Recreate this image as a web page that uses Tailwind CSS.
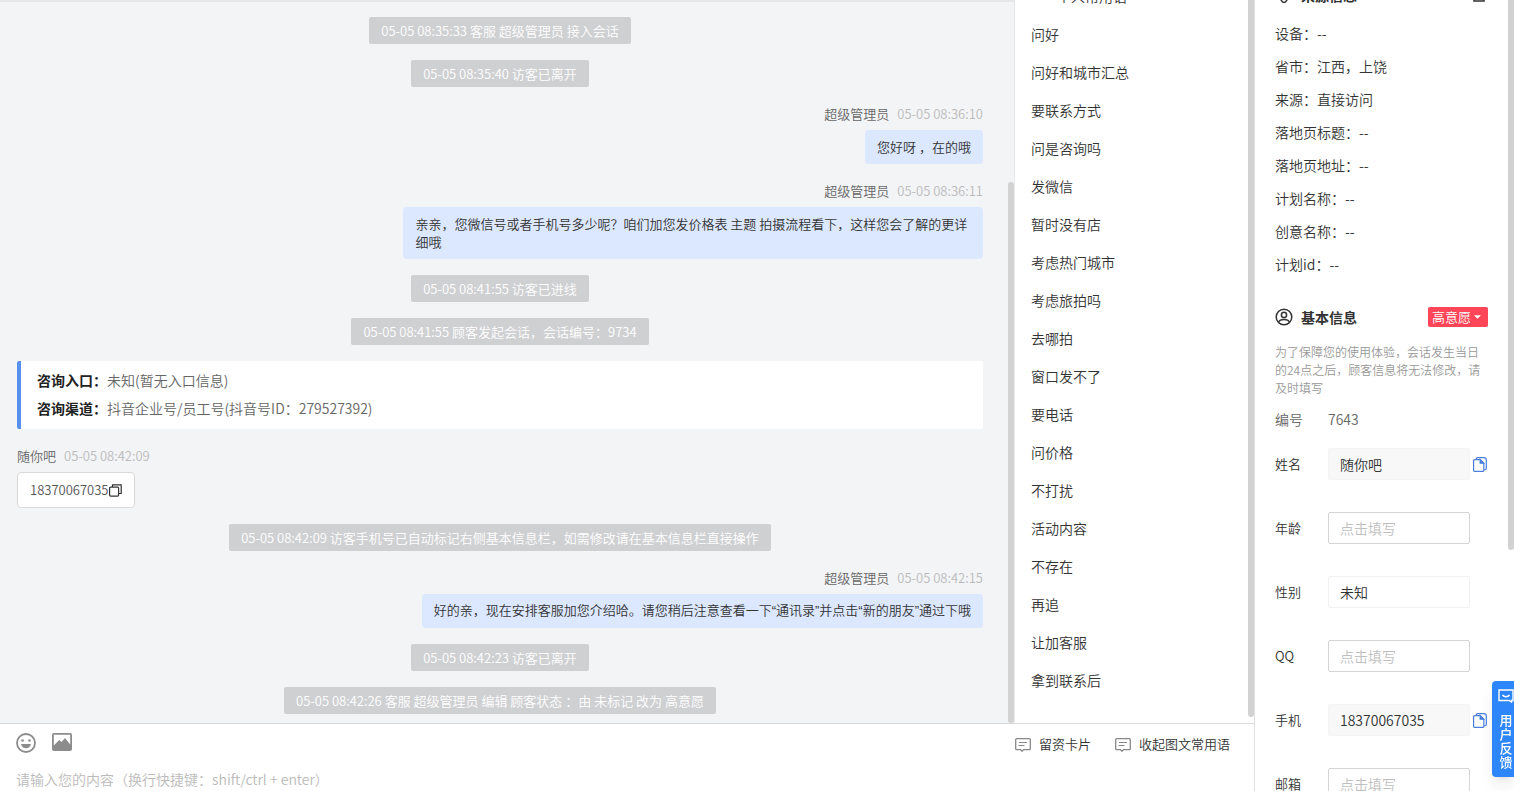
<!DOCTYPE html>
<html lang="zh-CN">
<head>
    <meta charset="UTF-8">
    <meta name="viewport" content="width=device-width, initial-scale=1.0">
    <title>客服工作台</title>
    <script src="https://cdn.jsdelivr.net/npm/@tailwindcss/browser@4"></script>
    <style>
        body {
            font-family: "Noto Sans CJK SC", sans-serif;
        }
    </style>
</head>
<body class="h-screen overflow-hidden bg-white text-sm font-[350] text-[#333]">
    <!-- 图标 -->
    <svg class="hidden">
        <symbol id="icon-copy" viewBox="0 0 14 15" fill="none" stroke="currentColor" stroke-width="1.200">
            <path d="M3.500 2.200V1.600a1 1 0 0 1 1-1h6.400a2.400 2.400 0 0 1 2.400 2.400v8.600a1 1 0 0 1-1 1h-1"/>
            <path d="M1.600 2.600h5.600l3.600 3.600v7.200a1 1 0 0 1-1 1H1.600a1 1 0 0 1-1-1V3.600a1 1 0 0 1 1-1z"/>
            <path fill="currentColor" d="M7.200 2.800v3.400h3.400z"/>
        </symbol>
        <symbol id="icon-card" viewBox="0 0 16 14" fill="none" stroke="currentColor">
            <path stroke-width="1.300" d="M1.700.7h12.600a1 1 0 0 1 1 1v9a1 1 0 0 1-1 1H8.500L7 13.200 5.500 11.700H1.700a1 1 0 0 1-1-1v-9a1 1 0 0 1 1-1z"/>
            <path stroke-width="1.200" d="M4 4.500h8M3.500 7.500h6"/>
        </symbol>
    </svg>

    <div class="flex h-full">
        <main class="flex min-w-0 flex-1 flex-col">
            <div class="flex min-h-0 flex-1">
                <!-- 会话记录 -->
                <section class="relative min-w-0 flex-1 overflow-hidden border-t-2 border-[#e6e7e9] bg-[#f3f4f6] text-[13px]">
                    <div class="flex flex-col gap-4 pt-[15px] pr-[31px] pl-[17px]">
                        <p class="self-center rounded-xs bg-[#cfd0d2] px-3 leading-[27px] text-white">05-05 08:35:33 客服 超级管理员 接入会话</p>
                        <p class="self-center rounded-xs bg-[#cfd0d2] px-3 leading-[27px] text-white">05-05 08:35:40 访客已离开</p>

                        <div class="flex flex-col items-end gap-[5px]">
                            <div class="flex gap-2 leading-[22px] text-[#666]"><span>超级管理员</span><time class="text-[#bbb]">05-05 08:36:10</time></div>
                            <p class="rounded-sm bg-[#dce8ff] px-3 py-2 leading-[18px]">您好呀 ，在的哦</p>
                        </div>

                        <div class="flex flex-col items-end gap-[5px]">
                            <div class="flex gap-2 leading-[22px] text-[#666]"><span>超级管理员</span><time class="text-[#bbb]">05-05 08:36:11</time></div>
                            <p class="max-w-[60%] rounded-sm bg-[#dce8ff] px-3 py-2 leading-[18px]">亲亲，您微信号或者手机号多少呢？咱们加您发价格表 主题 拍摄流程看下，这样您会了解的更详细哦</p>
                        </div>

                        <p class="self-center rounded-xs bg-[#cfd0d2] px-3 leading-[27px] text-white">05-05 08:41:55 访客已进线</p>
                        <p class="self-center rounded-xs bg-[#cfd0d2] px-3 leading-[27px] text-white">05-05 08:41:55 顾客发起会话，会话编号：9734</p>

                        <div class="rounded-xs border-l-4 border-[#568fee] bg-white px-4 pt-[5px] pb-[7px] text-sm leading-7 text-[#666]">
                            <p><b class="text-[#222]">咨询入口：</b>未知(暂无入口信息)</p>
                            <p><b class="text-[#222]">咨询渠道：</b>抖音企业号/员工号(抖音号ID：279527392)</p>
                        </div>

                        <div class="flex flex-col items-start gap-[5px]">
                            <div class="flex gap-2 leading-[22px] text-[#666]"><span>随你吧</span><time class="text-[#bbb]">05-05 08:42:09</time></div>
                            <div class="flex items-center rounded-sm border border-[#d9d9d9] bg-white px-3 py-2 leading-[18px] text-[#555]">
                                18370067035
                                <button type="button" aria-label="复制">
                                    <svg class="size-[13px]" viewBox="0 0 13 13" fill="none" stroke="#333" stroke-width="1.200"><rect x=".6" y="3.100" width="9" height="9" rx="1"/><path d="M3.500 3V.8h8.700v8.700H10"/></svg>
                                </button>
                            </div>
                        </div>

                        <p class="self-center rounded-xs bg-[#cfd0d2] px-3 leading-[27px] text-white">05-05 08:42:09 访客手机号已自动标记右侧基本信息栏，如需修改请在基本信息栏直接操作</p>

                        <div class="flex flex-col items-end gap-[5px]">
                            <div class="flex gap-2 leading-[22px] text-[#666]"><span>超级管理员</span><time class="text-[#bbb]">05-05 08:42:15</time></div>
                            <p class="rounded-sm bg-[#dce8ff] px-3 py-2 font-['Liberation_Sans','Noto_Sans_CJK_SC',sans-serif] leading-[18px]">好的亲，现在安排客服加您介绍哈。请您稍后注意查看一下“通讯录”并点击“新的朋友”通过下哦</p>
                        </div>

                        <p class="self-center rounded-xs bg-[#cfd0d2] px-3 leading-[27px] text-white">05-05 08:42:23 访客已离开</p>
                        <p class="self-center rounded-xs bg-[#cfd0d2] px-3 leading-[27px] text-white">05-05 08:42:26 客服 超级管理员 编辑 顾客状态 ：由 未标记 改为 高意愿</p>
                    </div>
                    <div class="absolute right-0 bottom-0 h-3/4 w-1.5 rounded-full bg-[#d2d2d2]"></div>
                </section>

                <!-- 常用语 -->
                <aside class="relative w-[240px] shrink-0 overflow-hidden border-l border-[#e8e8e8] bg-white">
                    <h2 class="-mt-[23px] pl-[42px] leading-[38px]">个人常用语</h2>
                    <ul class="pl-4 leading-[38px]">
                        <li>问好</li>
                        <li>问好和城市汇总</li>
                        <li>要联系方式</li>
                        <li>问是咨询吗</li>
                        <li>发微信</li>
                        <li>暂时没有店</li>
                        <li>考虑热门城市</li>
                        <li>考虑旅拍吗</li>
                        <li>去哪拍</li>
                        <li>窗口发不了</li>
                        <li>要电话</li>
                        <li>问价格</li>
                        <li>不打扰</li>
                        <li>活动内容</li>
                        <li>不存在</li>
                        <li>再追</li>
                        <li>让加客服</li>
                        <li>拿到联系后</li>
                    </ul>
                    <div class="absolute top-0 right-0 bottom-1.5 w-1.5 rounded-b-full bg-[#d2d2d2]"></div>
                </aside>
            </div>

            <!-- 输入区 -->
            <footer class="border-t border-[#d9d9d9] px-4 pt-[7px] text-[13px]">
                <div class="flex items-center">
                    <div class="flex flex-1 gap-4 text-[#8c8c8c]">
                        <button type="button" aria-label="表情">
                            <svg class="size-5" viewBox="0 0 20 20" fill="currentColor"><circle cx="10" cy="10" r="9" fill="none" stroke="currentColor" stroke-width="1.800"/><circle cx="6.500" cy="7.500" r="1.300"/><circle cx="13.500" cy="7.500" r="1.300"/><path d="M5 11h10c-.5 2.800-2.500 4.300-5 4.300S5.500 13.800 5 11z"/></svg>
                        </button>
                        <button type="button" aria-label="图片">
                            <svg class="size-5" viewBox="0 0 20 20" fill="currentColor"><path fill-rule="evenodd" d="M2 0h16a2 2 0 0 1 2 2v14a2 2 0 0 1-2 2H2a2 2 0 0 1-2-2V2a2 2 0 0 1 2-2zm-.2 1.800v10.700l5.400-5.500 2.300 2 3.500-4 5.200 6.500V1.800z"/></svg>
                        </button>
                    </div>
                    <div class="flex gap-6 pt-1 pr-2">
                        <button type="button" class="flex items-center gap-2"><svg class="h-3.5 w-4 text-[#888]"><use href="#icon-card"/></svg>留资卡片</button>
                        <button type="button" class="flex items-center gap-2"><svg class="h-3.5 w-4 text-[#888]"><use href="#icon-card"/></svg>收起图文常用语</button>
                    </div>
                </div>
                <textarea rows="1" aria-label="消息内容" placeholder="请输入您的内容（换行快捷键：shift/ctrl + enter）" class="mt-[15px] block h-[22px] w-full resize-none text-sm leading-5 outline-none placeholder:text-[#bbb]"></textarea>
            </footer>
        </main>

        <!-- 访客信息 -->
        <aside class="relative w-[260px] shrink-0 overflow-hidden border-l border-[#e0e0e0] bg-white pr-[26px] pl-5">
            <div class="-mt-[22px] mb-1.5 flex h-[33px] items-center gap-2">
                <svg class="size-[18px]" viewBox="0 0 18 18" fill="none" stroke="#333" stroke-width="1.500"><path d="M6.500 14.500a2.600 2.600 0 0 0 5 0C13.500 12 15 9.500 15 7A6 6 0 0 0 3 7c0 2.500 1.500 5 3.500 7.500z"/></svg>
                <h2 class="flex-1 font-bold">来源信息</h2>
                <svg class="size-[18px]" viewBox="0 0 18 18" fill="none" stroke="#333" stroke-width="1.500"><path d="M4 4h10v11H4z"/></svg>
            </div>
            <ul class="leading-[33px]">
                <li>设备：--</li>
                <li>省市：江西，上饶</li>
                <li>来源：直接访问</li>
                <li>落地页标题：--</li>
                <li>落地页地址：--</li>
                <li>计划名称：--</li>
                <li>创意名称：--</li>
                <li>计划id：--</li>
            </ul>

            <div class="mt-[26px] flex items-center gap-2">
                <svg class="size-[18px]" viewBox="0 0 18 18" fill="none" stroke="#333" stroke-width="1.500"><circle cx="9" cy="9" r="7.800"/><circle cx="9" cy="6.900" r="2.600"/><path d="M3.500 14.200c1-2.200 3-2.700 5.500-2.700s4.500.5 5.500 2.700"/></svg>
                <h2 class="flex-1 font-bold">基本信息</h2>
                <button type="button" class="flex h-5 items-center gap-[3px] rounded-xs bg-[#fe4658] px-1 text-[13px] text-white">高意愿<svg class="mr-[3px] h-1 w-[7px]" viewBox="0 0 8 4" fill="currentColor"><path d="M0 0h8L4 4z"/></svg></button>
            </div>
            <p class="mt-4 text-xs leading-[18px] text-[#999]">为了保障您的使用体验，会话发生当日的24点之后，顾客信息将无法修改，请及时填写</p>

            <form>
                <div class="mt-[11px] flex leading-[22px] text-[#666]"><span class="w-[53px]">编号</span><span>7643</span></div>
                <div class="mt-[18px] flex flex-col gap-8">
                    <div class="flex items-center">
                        <label for="name" class="w-[53px] text-[13px]">姓名</label>
                        <input id="name" value="随你吧" class="h-8 w-[142px] rounded-xs border border-[#f5f5f5] bg-[#f8f8f9] px-[11px] outline-none">
                        <button type="button" aria-label="复制姓名" class="ml-[3px] text-[#4a7fdc]"><svg class="h-[15px] w-3.5"><use href="#icon-copy"/></svg></button>
                    </div>
                    <div class="flex items-center">
                        <label for="age" class="w-[53px] text-[13px]">年龄</label>
                        <input id="age" placeholder="点击填写" class="h-8 w-[142px] rounded-xs border border-[#d4d4d4] px-[11px] outline-none placeholder:text-[#bfbfbf]">
                    </div>
                    <div class="flex items-center">
                        <label for="gender" class="w-[53px] text-[13px]">性别</label>
                        <select id="gender" class="h-8 w-[142px] appearance-none rounded-xs border border-[#f2f2f2] px-[11px] outline-none"><option>未知</option></select>
                    </div>
                    <div class="flex items-center">
                        <label for="qq" class="w-[53px] text-[13px]">QQ</label>
                        <input id="qq" placeholder="点击填写" class="h-8 w-[142px] rounded-xs border border-[#d4d4d4] px-[11px] outline-none placeholder:text-[#bfbfbf]">
                    </div>
                    <div class="flex items-center">
                        <label for="phone" class="w-[53px] text-[13px]">手机</label>
                        <input id="phone" value="18370067035" class="h-8 w-[142px] rounded-xs border border-[#f5f5f5] bg-[#f8f8f9] px-[11px] outline-none">
                        <button type="button" aria-label="复制手机" class="ml-[3px] text-[#4a7fdc]"><svg class="h-[15px] w-3.5"><use href="#icon-copy"/></svg></button>
                    </div>
                    <div class="flex items-center">
                        <label for="email" class="w-[53px] text-[13px]">邮箱</label>
                        <input id="email" placeholder="点击填写" class="h-8 w-[142px] rounded-xs border border-[#d4d4d4] px-[11px] outline-none placeholder:text-[#bfbfbf]">
                    </div>
                </div>
            </form>
            <div class="absolute top-0 right-0 h-[550px] w-1.5 rounded-b-full bg-[#d2d2d2]"></div>
        </aside>
    </div>

    <!-- 用户反馈 -->
    <button type="button" class="fixed right-0 bottom-3.5 flex h-24 w-[22px] flex-col items-center gap-2.5 rounded-l-sm bg-[#2e86fb] pt-2 pl-1.5 text-[13px] leading-[14px] font-medium text-white shadow-lg">
        <svg class="h-3.5 w-4 shrink-0" viewBox="0 0 16 14" fill="none" stroke="currentColor" stroke-width="1.400"><path d="M1 1h14v10.500h-1.500V13L11 11.500H1z"/><path d="M4.500 6c1.500 2.300 5.500 2.300 7 0"/></svg>
        <span class="w-[13px]">用户反馈</span>
    </button>
</body>
</html>
